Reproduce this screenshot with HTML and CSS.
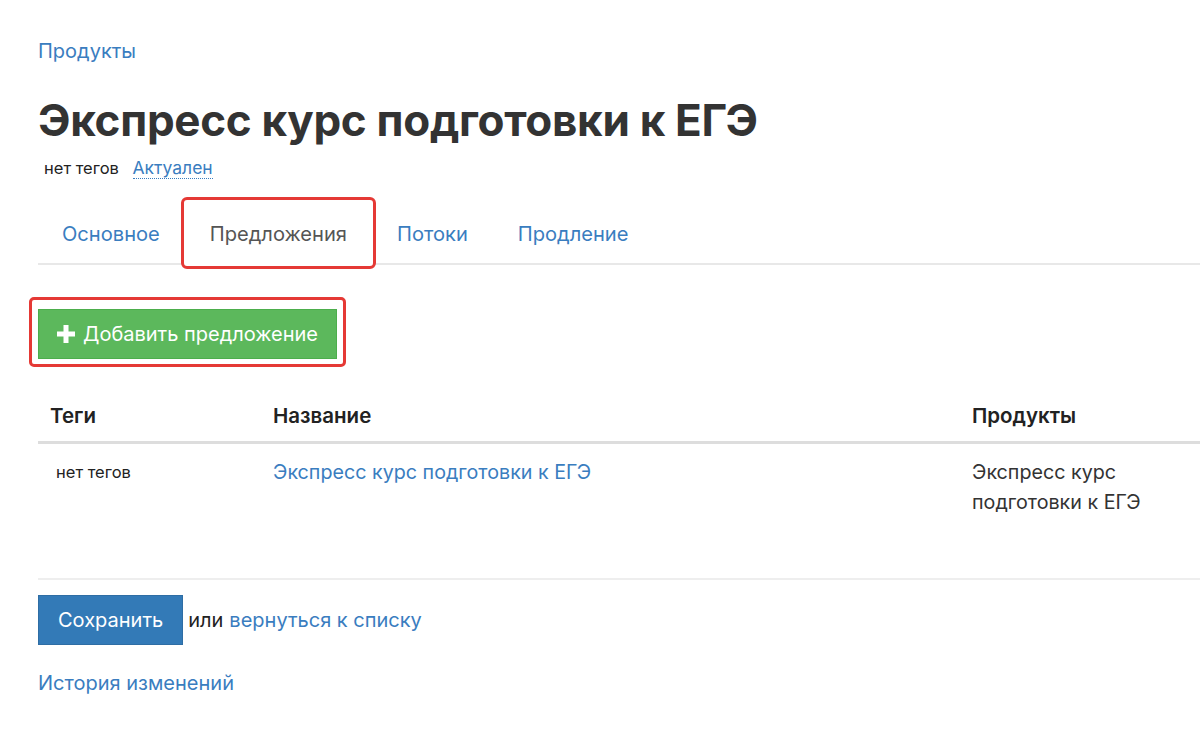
FILE: index.html
```html
<!DOCTYPE html>
<html lang="ru">
<head>
    <meta charset="UTF-8">
    <title>Экспресс курс подготовки к ЕГЭ</title>
    <link rel="stylesheet" href="styles.css">
</head>
<body>
    <div class="page">
        <a href="#" class="breadcrumb">Продукты</a>

        <h1 class="product-title">Экспресс курс подготовки к ЕГЭ</h1>
        <div class="product-meta">
            <span class="tags">нет тегов</span>
            <a href="#" class="status-link">Актуален</a>
        </div>

        <ul class="tabs">
            <li><a href="#">Основное</a></li>
            <li class="active"><a href="#">Предложения</a></li>
            <li><a href="#">Потоки</a></li>
            <li><a href="#">Продление</a></li>
        </ul>

        <div class="add-area">
            <a href="#" class="btn-add">
                <svg class="plus" viewBox="0 0 18 18" width="18" height="18">
                    <path d="M6.5 0h5v6.5H18v5h-6.5V18h-5v-6.5H0v-5h6.5z" fill="#fff"/>
                </svg>
                Добавить предложение
            </a>
        </div>

        <table class="offers">
            <thead>
                <tr>
                    <th class="col-tags">Теги</th>
                    <th class="col-name">Название</th>
                    <th class="col-products">Продукты</th>
                </tr>
            </thead>
            <tbody>
                <tr>
                    <td class="small"><span>нет тегов</span></td>
                    <td><a href="#">Экспресс курс подготовки к ЕГЭ</a></td>
                    <td>Экспресс курс подготовки к ЕГЭ</td>
                </tr>
            </tbody>
        </table>

        <div class="form-actions">
            <button class="btn-save">Сохранить</button>
            <span class="or">или</span>
            <a href="#">вернуться к списку</a>
        </div>

        <a href="#" class="history">История изменений</a>
    </div>
</body>
</html>
```

FILE: styles.css
```css
* {
  box-sizing: border-box;
}

body {
    margin: 0;
    background: #fff;
    font-family: 'Inter', 'Noto Sans', sans-serif;
    color: #333;
    overflow-x: hidden;
}

a {
    color: #3a7dbf;
    text-decoration: none;
}

.page {
    padding: 38px 0 0 38px;
    width: 1200px;
}

.breadcrumb {
    display: inline-block;
    font-size: 20px;
    line-height: 26px;
}

.product-title {
    margin: 31px 0 0 0;
    font-size: 44px;
    line-height: 50px;
    font-weight: 700;
    color: #333;
    letter-spacing: -0.3px;
}

.product-meta {
    margin-top: 12px;
    padding-left: 6px;
    font-size: 16.5px;
    line-height: 22px;
}

.product-meta .tags {
    color: #222;
    margin-right: 9px;
}

.status-link {
    font-size: 17.5px;
    border-bottom: 1px dotted #3a7dbf;
}

.tabs {
    list-style: none;
    margin: 18px 0 0 0;
    padding: 0;
    display: flex;
    border-bottom: 2px solid #e8e8e8;
}

.tabs li {
    margin-right: 2px;
}

.tabs li a {
    display: block;
    padding: 19px 21px 11px;
    font-size: 20.1px;
    line-height: 30px;
    border: 3px solid transparent;
}

/* active tab is highlighted with a red frame */
.tabs li.active a {
    color: #555;
    border-color: #e53935;
    border-radius: 6px;
    margin: 0 -5px -6px;
    padding: 19px 26px 17px;
    background: #fff;
}

.add-area {
    margin-top: 32px;
    margin-left: -9px;
    display: inline-block;
    border: 3px solid #e53935;
    border-radius: 5px;
    padding: 9px 6px 5px;
}

.btn-add {
    display: flex;
    align-items: center;
    gap: 8px;
    background: #5cb85c;
    border: 1px solid #4cae4c;
    color: #fff;
    font-size: 20px;
    line-height: 28px;
    padding: 10px 18px;
}

.offers {
    margin-top: 22px;
    width: 1162px;
    border-collapse: collapse;
    font-size: 19.7px;
}

.offers th {
    text-align: left;
    font-size: 20.5px;
    font-weight: 600;
    color: #222;
    padding: 14px 12px 12px;
    border-bottom: 3px solid #ddd;
    line-height: 26px;
}

.col-tags {
    width: 223px;
}

.col-name {
    width: 699px;
}

.offers td {
    vertical-align: top;
    padding: 13px 12px 61px;
    line-height: 30px;
    color: #333;
    border-bottom: 2px solid #eee;
}

.offers td.small {
    font-size: 16.5px;
    color: #222;
}

.offers td.small span {
    padding-left: 6px;
}

.form-actions {
    margin-top: 15px;
    display: flex;
    align-items: center;
    font-size: 20px;
}

.btn-save {
    background: #337ab7;
    border: 1px solid #2e6da4;
    color: #fff;
    font-family: inherit;
    font-size: 20px;
    line-height: 28px;
    padding: 10px 19px;
    margin-right: 5px;
}

.or {
    color: #222;
    margin-right: 6px;
}

.form-actions a {
    font-size: 20px;
}

.history {
    display: inline-block;
    margin-top: 26px;
    font-size: 20px;
}
```
